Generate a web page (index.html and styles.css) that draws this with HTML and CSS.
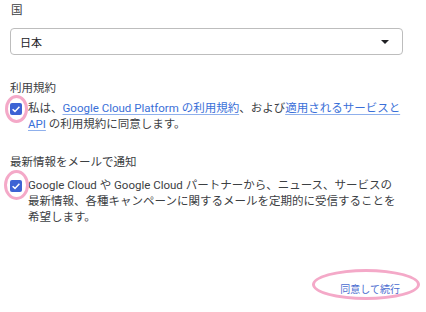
FILE: index.html
```html
<!DOCTYPE html>
<html lang="ja">
<head>
<meta charset="utf-8">
<link rel="stylesheet" href="styles.css">
</head>
<body>
<div class="page">
  <div class="label first">国</div>
  <div class="select">
    <span class="select-value">日本</span>
    <span class="arrow"></span>
  </div>

  <div class="label section">利用規約</div>
  <div class="check-row">
    <span class="check-wrap">
      <span class="ring ring1"></span>
      <span class="checkbox"><svg viewBox="0 0 12 12" width="12" height="12"><path d="M2.6 6.2 L5 8.4 L9.4 3.8" fill="none" stroke="#fff" stroke-width="1.5"/></svg></span>
    </span>
    <p class="check-text">私は、<a class="link">Google Cloud Platform の利用規約</a>、および<a class="link">適用されるサービスと API</a> の利用規約に同意します。</p>
  </div>

  <div class="label section2">最新情報をメールで通知</div>
  <div class="check-row row2">
    <span class="check-wrap">
      <span class="ring ring2"></span>
      <span class="checkbox"><svg viewBox="0 0 12 12" width="12" height="12"><path d="M2.6 6.2 L5 8.4 L9.4 3.8" fill="none" stroke="#fff" stroke-width="1.5"/></svg></span>
    </span>
    <p class="check-text">Google Cloud や Google Cloud パートナーから、ニュース、サービスの最新情報、各種キャンペーンに関するメールを定期的に受信することを希望します。</p>
  </div>

  <div class="actions">
    <span class="btn">同意して続行<span class="ring ring3"></span></span>
  </div>
</div>
</body>
</html>
```

FILE: styles.css
```css
html, body {
  margin: 0;
  padding: 0;
  background: #fff;
}
body {
  font-family: Roboto, "Noto Sans CJK JP", sans-serif;
  font-size: 11.5px;
  color: #3c4043;
  width: 426px;
  height: 312px;
  overflow: hidden;
}
.page {
  padding: 2px 23px 0 10px;
}
.label {
  line-height: 16px;
  color: #3c4043;
}
.first {
  padding-left: 1px;
}
.select {
  margin-top: 10px;
  height: 25px;
  border: 1px solid #bdbdbd;
  border-radius: 4px;
  display: flex;
  align-items: center;
  justify-content: space-between;
  padding: 0 13px 0 9px;
}
.select-value {
  font-size: 11px;
  color: #202124;
}
.arrow {
  width: 0;
  height: 0;
  border-left: 4px solid transparent;
  border-right: 4px solid transparent;
  border-top: 4px solid #202124;
}
.section {
  margin-top: 25px;
}
.section2 {
  margin-top: 22px;
}
.check-row {
  display: flex;
  align-items: flex-start;
  gap: 6px;
  margin-top: 4px;
}
.row2 {
  margin-top: 7px;
}
.check-wrap {
  position: relative;
  flex: none;
  width: 12px;
  height: 12px;
  margin-top: 3px;
}
.checkbox {
  display: block;
  width: 12px;
  height: 12px;
  background: #3d63d4;
  border-radius: 2px;
}
.checkbox svg {
  display: block;
}
.ring {
  position: absolute;
  border: 3px solid #f4a9c8;
  border-radius: 50%;
  box-sizing: border-box;
}
.ring1 {
  left: -5px;
  top: -8px;
  width: 23px;
  height: 28px;
}
.ring2 {
  left: -6px;
  top: -10px;
  width: 25px;
  height: 30px;
}
.check-text {
  margin: 0;
  line-height: 16px;
  color: #3c4043;
}
.link {
  color: #3a6fd8;
  text-decoration: underline;
  text-decoration-color: #8fb0ec;
  text-underline-offset: 2px;
}
.actions {
  display: flex;
  justify-content: flex-end;
  margin-top: 58px;
  padding-right: 3px;
}
.btn {
  position: relative;
  font-size: 10px;
  color: #4a6cd0;
  line-height: 14px;
}
.ring3 {
  left: -28px;
  top: -14px;
  width: 108px;
  height: 31px;
  border-width: 3px;
}
```
